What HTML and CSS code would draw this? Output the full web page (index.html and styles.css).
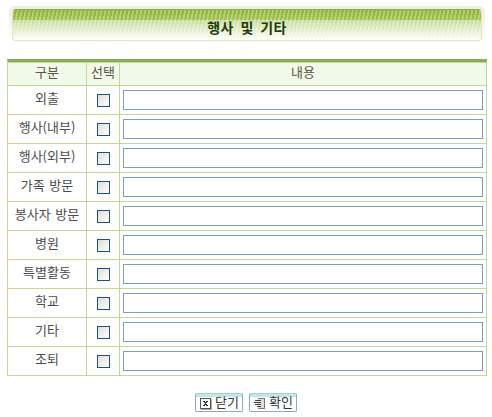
FILE: index.html
```html
<!DOCTYPE html>
<html lang="ko">
<head>
  <meta charset="UTF-8" />
  <title>행사 및 기타</title>
  <link rel="stylesheet" href="styles.css">
</head>
<body>
  <div class="title-wrap">
    <h1 class="title">행사 및 기타</h1>
  </div>

  <table class="list">
    <thead>
      <tr><th class="col-name">구분</th><th class="col-check">선택</th><th>내용</th></tr>
    </thead>
    <tbody>
      <tr><td class="name">외출</td><td><input type="checkbox" class="check"></td><td><input type="text" class="text"></td></tr>
      <tr><td class="name">행사(내부)</td><td><input type="checkbox" class="check"></td><td><input type="text" class="text"></td></tr>
      <tr><td class="name">행사(외부)</td><td><input type="checkbox" class="check"></td><td><input type="text" class="text"></td></tr>
      <tr><td class="name">가족 방문</td><td><input type="checkbox" class="check"></td><td><input type="text" class="text"></td></tr>
      <tr><td class="name">봉사자 방문</td><td><input type="checkbox" class="check"></td><td><input type="text" class="text"></td></tr>
      <tr><td class="name">병원</td><td><input type="checkbox" class="check"></td><td><input type="text" class="text"></td></tr>
      <tr><td class="name">특별활동</td><td><input type="checkbox" class="check"></td><td><input type="text" class="text"></td></tr>
      <tr><td class="name">학교</td><td><input type="checkbox" class="check"></td><td><input type="text" class="text"></td></tr>
      <tr><td class="name">기타</td><td><input type="checkbox" class="check"></td><td><input type="text" class="text"></td></tr>
      <tr><td class="name">조퇴</td><td><input type="checkbox" class="check"></td><td><input type="text" class="text"></td></tr>
    </tbody>
  </table>

  <div class="buttons">
    <button type="button" class="btn">
      <svg width="12" height="12" viewBox="0 0 12 12" shape-rendering="crispEdges">
        <path d="M.5 .5h10v10H.5z" fill="#fff" stroke="#555"/>
        <path d="M11.500 1v10.500H1" fill="none" stroke="#aaa"/>
        <path d="M3 3h2v1h1V3h2v1H7v1H6v1h1v1h1v1H6V7H5v1H3V7h1V6h1V5H4V4H3z" fill="#333"/>
      </svg>
      <span>닫기</span>
    </button>
    <button type="button" class="btn">
      <svg width="12" height="12" viewBox="0 0 12 12" shape-rendering="crispEdges">
        <path d="M4 .5h6.500v10H4" fill="#ddd" stroke="#777"/>
        <path d="M1 2.500h6M0 4.500h7M1 6.500h6M3 8.500h4" stroke="#444"/>
      </svg>
      <span>확인</span>
    </button>
  </div>
</body>
</html>
```

FILE: styles.css
```css
* {
  box-sizing: border-box;
}

body {
  margin: 0;
  padding: 6px 5px 0 7px;
  background: #fff;
  color: #4c4c4c;
  font-family: "Noto Sans CJK KR", sans-serif;
  font-size: 13px;
  word-spacing: 1px;
}

.title-wrap {
  width: 476px;
  height: 36px;
  margin-left: 2px;
  padding: 3px 3px 1px;
  border-radius: 6px;
  background: linear-gradient(#ececec, #f2f2f2 40%, #fff);
}

.title {
  height: 32px;
  margin: 0;
  border: 1px solid #dde8bd;
  border-top-color: #92b13c;
  border-radius: 4px;
  background:
    repeating-linear-gradient(102deg, rgba(255, 255, 255, .3) 0 1.5px, transparent 2px 3.9px),
    linear-gradient(#8fb332 0, #a3c156 10px, #c8da9a 10px, #fff 30px);
  color: #233b08;
  font-size: 14px;
  line-height: 34px;
  text-align: center;
  word-spacing: 2.500px;
  letter-spacing: .3px;
}

.list {
  width: 480px;
  margin-top: 17px;
  border-top: 3px solid #8aac57;
  border-collapse: separate;
  border-spacing: 0;
  border-left: 1px solid #c2d996;
  table-layout: fixed;
}

.list th,
.list td {
  padding: 0;
  border: solid #c2d996;
  border-width: 0 1px 1px 0;
  text-align: center;
  vertical-align: top;
}

.list th {
  height: 24px;
  border-top-width: 1px;
  background: #f1f9e9;
  color: #5d5647;
  font-weight: normal;
  line-height: 18px;
}

.list td {
  height: 29px;
}

.list .name {
  line-height: 24px;
}

.col-name {
  width: 79px;
}

.col-check {
  width: 33px;
}

.check {
  display: block;
  width: 13px;
  height: 13px;
  margin: 8px auto 0 10px;
  border: 1px solid #1c5180;
  background: linear-gradient(135deg, #dcdcd7, #fff);
  appearance: none;
}

.text {
  display: block;
  width: 360px;
  height: 20px;
  margin: 4px 3px 0;
  padding: 0 2px;
  border: 1px solid #7f9db9;
}

.buttons {
  display: flex;
  justify-content: center;
  gap: 6px;
  width: 478px;
  margin-top: 17px;
}

.btn {
  display: flex;
  align-items: center;
  gap: 3px;
  width: 48px;
  height: 19px;
  padding: 2px 0 0 4px;
  border: 1px solid #93a9b5;
  border-top-color: #a9cdd2;
  border-radius: 2px;
  background: linear-gradient(#c0e8e8 3px, #fff 3px);
  color: #333;
  font: 13px/14px "Noto Sans CJK KR", sans-serif;
}

.btn svg {
  flex: none;
}

.btn span {
  margin-top: -3px;
}
```
